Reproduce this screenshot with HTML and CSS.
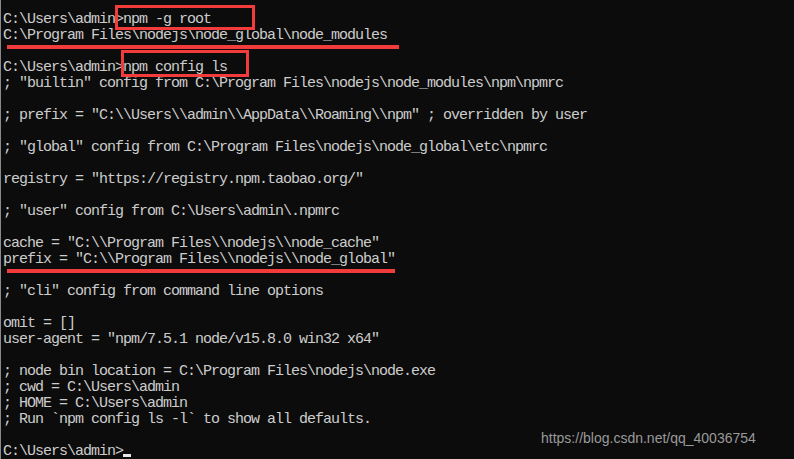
FILE: index.html
```html
<!DOCTYPE html>
<html>
<head>
<meta charset="utf-8">
<link rel="stylesheet" href="styles.css">
</head>
<body>
<div class="console">
<div class="output">
<div class="ln">C:\Users\admin&gt;npm -g root</div>
<div class="ln">C:\Program Files\nodejs\node_global\node_modules</div>
<div class="ln"></div>
<div class="ln">C:\Users\admin&gt;npm config ls</div>
<div class="ln">; "builtin" config from C:\Program Files\nodejs\node_modules\npm\npmrc</div>
<div class="ln"></div>
<div class="ln">; prefix = "C:\\Users\\admin\\AppData\\Roaming\\npm" ; overridden by user</div>
<div class="ln"></div>
<div class="ln">; "global" config from C:\Program Files\nodejs\node_global\etc\npmrc</div>
<div class="ln"></div>
<div class="ln">registry = "https://registry.npm.taobao.org/"</div>
<div class="ln"></div>
<div class="ln">; "user" config from C:\Users\admin\.npmrc</div>
<div class="ln"></div>
<div class="ln">cache = "C:\\Program Files\\nodejs\\node_cache"</div>
<div class="ln">prefix = "C:\\Program Files\\nodejs\\node_global"</div>
<div class="ln"></div>
<div class="ln">; "cli" config from command line options</div>
<div class="ln"></div>
<div class="ln">omit = []</div>
<div class="ln">user-agent = "npm/7.5.1 node/v15.8.0 win32 x64"</div>
<div class="ln"></div>
<div class="ln">; node bin location = C:\Program Files\nodejs\node.exe</div>
<div class="ln">; cwd = C:\Users\admin</div>
<div class="ln">; HOME = C:\Users\admin</div>
<div class="ln">; Run `npm config ls -l` to show all defaults.</div>
<div class="ln"></div>
<div class="ln">C:\Users\admin&gt;<span class="cursor"></span></div>
</div>
<div class="mark box box-root"></div>
<div class="mark line line-root"></div>
<div class="mark box box-ls"></div>
<div class="mark line line-prefix"></div>
<div class="watermark">https://blog.csdn.net/qq_40036754</div>
</div>
</body>
</html>
```
FILE: styles.css
```css
html, body {
  margin: 0;
  padding: 0;
  background: #0c0c0c;
}
.console {
  position: relative;
  width: 794px;
  height: 459px;
  overflow: hidden;
  background: #0c0c0c;
  border-left: 1px solid #8a8a8a;
  box-sizing: border-box;
  padding-left: 2px;
}
.output {
  padding-top: 12px;
  font-family: "Liberation Mono", "DejaVu Sans Mono", monospace;
  font-size: 15px;
  letter-spacing: -1px;
  line-height: 16px;
  color: #cccccc;
}
.ln {
  white-space: pre;
  width: fit-content;
  height: 16px;
}
.cursor {
  display: inline-block;
  width: 8px;
  height: 3px;
  background: #e8e8e8;
  vertical-align: -2px;
}
.mark {
  position: absolute;
}
.box {
  border: 3px solid #f23b3b;
  box-sizing: border-box;
}
.box-root {
  left: 114px;
  top: 5px;
  width: 140px;
  height: 25px;
}
.box-ls {
  left: 120px;
  top: 50px;
  width: 128px;
  height: 27px;
}
.line {
  height: 4px;
  background: #f23b3b;
}
.line-root {
  left: 6px;
  top: 45px;
  width: 392px;
}
.line-prefix {
  left: 6px;
  top: 269px;
  width: 388px;
}
.watermark {
  position: absolute;
  left: 540px;
  top: 430px;
  font-family: "Liberation Sans", Arial, sans-serif;
  font-size: 14px;
  color: #9a9a9a;
}
```
